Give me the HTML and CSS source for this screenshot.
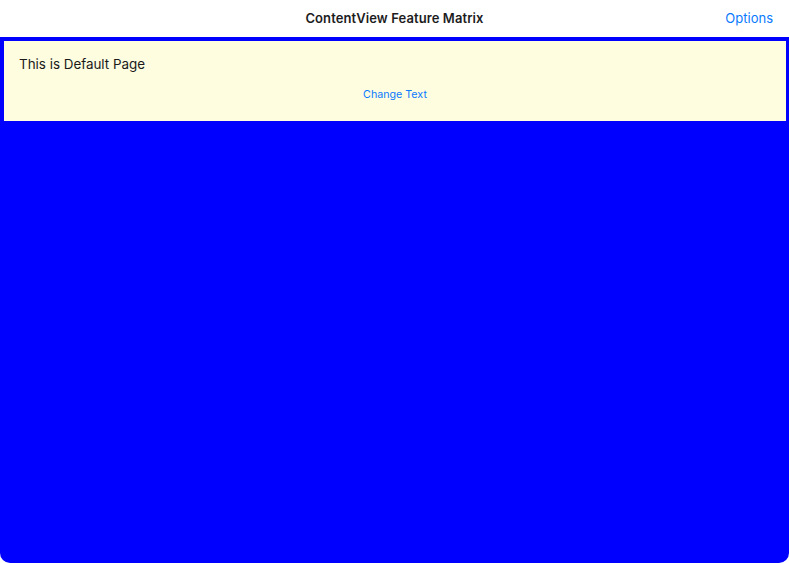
FILE: index.html
```html
<!DOCTYPE html>
<html>
<head>
<meta charset="utf-8">
<link rel="stylesheet" href="styles.css">
</head>
<body>
<div class="app">
  <header class="navbar">
    <div class="title">ContentView Feature Matrix</div>
    <a class="options">Options</a>
  </header>
  <main class="content">
    <section class="panel">
      <p class="label">This is Default Page</p>
      <a class="change">Change Text</a>
    </section>
  </main>
</div>
</body>
</html>
```
FILE: styles.css
```css
* { box-sizing: border-box; }
html, body {
  margin: 0;
  padding: 0;
  background: #ffffff;
  width: 789px;
  height: 563px;
  overflow: hidden;
}
body {
  font-family: "Inter", "Liberation Sans", sans-serif;
  -webkit-font-smoothing: antialiased;
}
.app {
  display: flex;
  flex-direction: column;
  height: 563px;
}
.navbar {
  height: 37px;
  flex: 0 0 37px;
  display: flex;
  align-items: center;
  justify-content: center;
  position: relative;
  background: #ffffff;
  padding-bottom: 1px;
}
.title {
  font-size: 13px;
  font-weight: 600;
  color: #1c1c1e;
  letter-spacing: 0.1px;
}
.options {
  position: absolute;
  right: 16px;
  top: 10px;
  font-size: 13px;
  color: #0a7aff;
}
.content {
  flex: 1;
  background: #0000ff;
  border-radius: 0 0 10px 10px;
  padding: 4px 3px 0 4px;
}
.panel {
  background: #fefde0;
  height: 80px;
  padding: 15px 15px 0 15px;
  display: flex;
  flex-direction: column;
}
.label {
  margin: 0;
  font-size: 13.4px;
  color: #1a1a1a;
  line-height: 17px;
}
.change {
  margin-top: 15px;
  align-self: center;
  font-size: 10.7px;
  color: #0a7aff;
  line-height: 13px;
}
```
